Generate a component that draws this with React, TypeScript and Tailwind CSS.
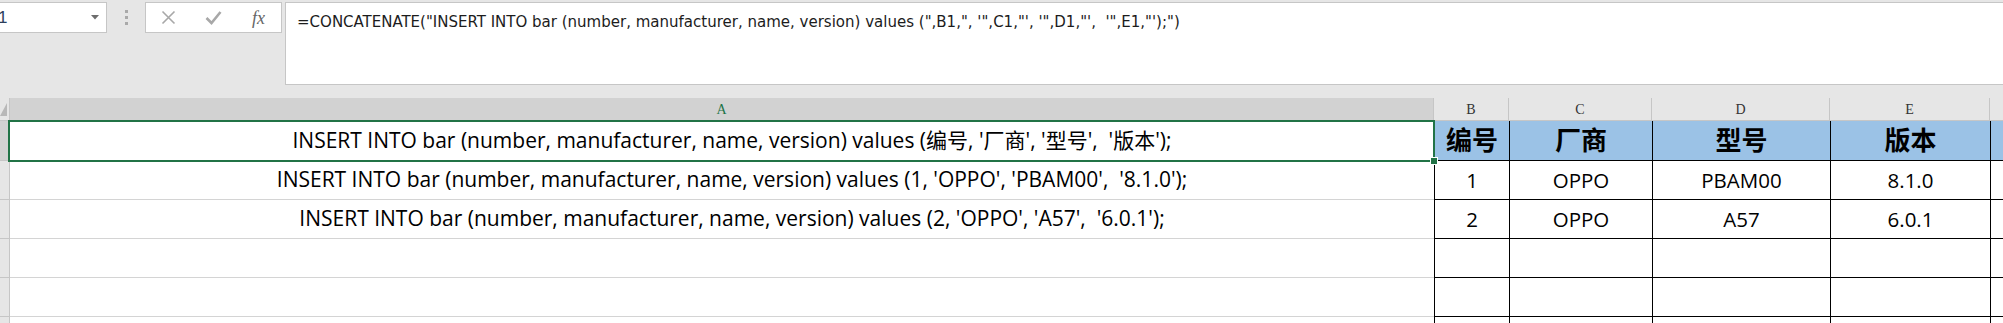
import React from "react";

const DATA_FONT = "font-['Open_Sans','Noto_Sans_CJK_SC',sans-serif]";

const rowsA = [
  "INSERT INTO bar (number, manufacturer, name, version) values (编号, '厂商', '型号',  '版本');",
  "INSERT INTO bar (number, manufacturer, name, version) values (1, 'OPPO', 'PBAM00',  '8.1.0');",
  "INSERT INTO bar (number, manufacturer, name, version) values (2, 'OPPO', 'A57',  '6.0.1');",
  "",
  "",
  "",
];

const table = [
  ["编号", "厂商", "型号", "版本"],
  ["1", "OPPO", "PBAM00", "8.1.0"],
  ["2", "OPPO", "A57", "6.0.1"],
  ["", "", "", ""],
  ["", "", "", ""],
  ["", "", "", ""],
];

const colW = ["w-[75px]", "w-[143px]", "w-[178px]", "w-[160px]"];
const colNames = ["B", "C", "D", "E"];

function FormulaBar() {
  return (
    <div className="h-[98px] flex items-start pt-[2px]">
      {/* name box */}
      <div className="w-[107px] h-[31px] bg-white border border-l-0 border-[#c6c6c6] flex items-center justify-between pr-[7px]">
        <span className="text-[17px] text-[#2c3e5c] -ml-[2px] font-['Liberation_Sans',sans-serif]">1</span>
        <svg width="8" height="5" viewBox="0 0 8 5">
          <path d="M0 0 L8 0 L4 4.5 Z" fill="#6d6d6d" />
        </svg>
      </div>
      {/* grip */}
      <div className="w-[38px] h-[31px] flex flex-col items-center justify-center gap-[3px]">
        <span className="w-[3px] h-[3px] bg-[#a9a9a9]" />
        <span className="w-[3px] h-[3px] bg-[#a9a9a9]" />
        <span className="w-[3px] h-[3px] bg-[#a9a9a9]" />
      </div>
      {/* cancel / enter / fx */}
      <div className="w-[137px] h-[31px] bg-white border border-[#c6c6c6] flex items-center">
        <div className="w-[45px] flex justify-center">
          <svg width="15" height="15" viewBox="0 0 15 15">
            <path d="M1.5 1.5 L13.5 13.5 M13.5 1.5 L1.5 13.5" stroke="#a8a8a8" strokeWidth="1.6" fill="none" />
          </svg>
        </div>
        <div className="w-[45px] flex justify-center">
          <svg width="17" height="15" viewBox="0 0 17 15">
            <path d="M1.5 8 L6.5 13 L15.5 2" stroke="#a8a8a8" strokeWidth="2.6" fill="none" />
          </svg>
        </div>
        <div className="w-[45px] flex justify-center">
          <span className="italic text-[18px] text-[#666] font-['Liberation_Serif',serif] leading-none">fx</span>
        </div>
      </div>
      {/* formula input */}
      <div className="ml-[3px] flex-1 h-[83px] bg-white border border-r-0 border-[#c6c6c6] pl-[11px] pt-[6px]">
        <span className="text-[16.7px] text-[#1c1c1c] whitespace-pre font-['Liberation_Sans_Narrow','DejaVu_Sans_Condensed',sans-serif]">
          {"=CONCATENATE(\"INSERT INTO bar (number, manufacturer, name, version) values (\",B1,\", '\",C1,\"', '\",D1,\"',  '\",E1,\"');\")"}
        </span>
      </div>
    </div>
  );
}

function HeaderRow() {
  return (
    <div className="flex h-[23px] font-['Liberation_Serif',serif] text-[14px]">
      <div className="w-[10px] shrink-0 bg-[#e6e6e6] border-r border-b border-[#c6c6c6] relative">
        <svg className="absolute left-0 top-[5px]" width="7" height="13" viewBox="0 0 7 13">
          <path d="M7 0 L7 13 L0 13 Z" fill="#b8b8b8" />
        </svg>
      </div>
      <div className="w-[1424px] shrink-0 bg-[#d2d2d2] border-r border-[#c6c6c6] flex items-center justify-center text-[#217346]">
        A
      </div>
      {colNames.map((c, i) => (
        <div
          key={c}
          className={`${colW[i]} shrink-0 bg-[#e6e6e6] border-r border-b border-[#c6c6c6] flex items-center justify-center text-[#333]`}
        >
          {c}
        </div>
      ))}
      <div className="flex-1 bg-[#e6e6e6] border-b border-[#c6c6c6]" />
    </div>
  );
}

function DataRow({ idx }: { idx: number }) {
  const first = idx === 0;
  return (
    <div className={`flex ${first ? "h-[40px]" : "h-[39px]"} ${DATA_FONT}`}>
      <div
        className={`w-[10px] shrink-0 border-r border-b border-[#c6c6c6] ${first ? "bg-[#d2d2d2]" : "bg-[#e6e6e6]"}`}
      />
      <div className="w-[1424px] shrink-0 bg-white border-b border-[#d4d4d4] flex items-center justify-center pl-[20px] text-[21px] text-black whitespace-pre">
        {rowsA[idx]}
      </div>
      {table[idx].map((v, i) => (
        <div
          key={i}
          className={`${colW[i]} shrink-0 border-l border-b border-black flex items-center justify-center ${
            first ? "bg-[#9bc2e6] font-bold text-[26px]" : "bg-white text-[20.5px]"
          } text-black`}
        >
          {v}
        </div>
      ))}
      <div className={`flex-1 border-l border-b border-black ${first ? "bg-[#9bc2e6]" : "bg-white"}`} />
    </div>
  );
}

export default function App() {
  return (
    <div className="w-[2003px] h-[323px] overflow-hidden bg-[#e6e6e6] relative">
      <FormulaBar />
      <HeaderRow />
      {rowsA.map((_, i) => (
        <DataRow key={i} idx={i} />
      ))}
      {/* active cell selection */}
      <div className="absolute left-[8px] top-[120px] w-[1427px] h-[42px] border-2 border-[#217346] pointer-events-none" />
      <div className="absolute left-[1431px] top-[158px] w-[6px] h-[6px] bg-[#217346] outline outline-1 outline-white" />
    </div>
  );
}
